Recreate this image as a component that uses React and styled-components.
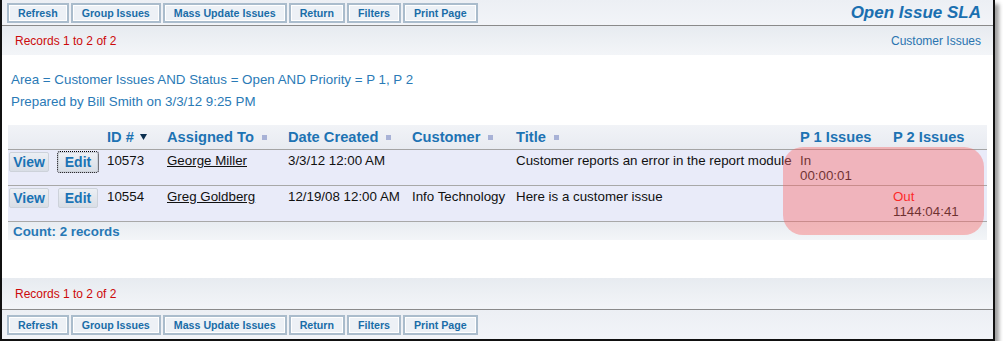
import React from 'react';
import styled, { createGlobalStyle } from 'styled-components';

const Global = createGlobalStyle`
  html, body { margin: 0; padding: 0; background: #fff; }
  body { font-family: "Liberation Sans", Arial, sans-serif; }
  * { box-sizing: border-box; }
`;

const Frame = styled.div`
  width: 995px;
  height: 341px;
  border: 2px solid #111;
  border-top: none;
  box-shadow: 4px 4px 4px rgba(0, 0, 0, 0.38);
  background: #fff;
  display: flex;
  flex-direction: column;
`;

const Toolbar = styled.div`
  display: flex;
  align-items: flex-start;
  justify-content: space-between;
  height: ${(p) => p.$h}px;
  padding: ${(p) => p.$pt}px 12px 0 5px;
  background: linear-gradient(#eceff4, #f2f4f8);
  ${(p) => (p.$bottom ? 'border-top: 1px solid #8a8a8a;' : 'border-bottom: 1px solid #8a8a8a;')}
  flex: none;
`;

const ButtonGroup = styled.div`
  display: flex;
  gap: 2px;
`;

const ToolButton = styled.button`
  height: 20px;
  padding: 0 9px;
  border: 2px solid #aabccc;
  box-shadow: inset 0 0 0 1px #fff;
  background: #edf1f6;
  color: #1a6da8;
  font-family: "Liberation Sans", Arial, sans-serif;
  font-weight: bold;
  font-size: 10.67px;
  line-height: 16px;
  cursor: pointer;
`;

const PageTitle = styled.div`
  font-size: 17px;
  font-weight: bold;
  font-style: italic;
  color: #1b6fb0;
  line-height: 20px;
`;

const RecordsBar = styled.div`
  display: flex;
  align-items: center;
  justify-content: space-between;
  height: ${(p) => p.$h}px;
  padding: 0 12px 0 13px;
  background: linear-gradient(#e7ebf0, #f3f5f8);
  font-size: 12px;
  flex: none;
`;

const RecordsText = styled.span`
  color: #cc0a0a;
`;

const AreaLink = styled.span`
  color: #2a74b0;
`;

const Main = styled.div`
  flex: 1;
  display: flex;
  flex-direction: column;
`;

const Criteria = styled.div`
  padding: 14px 0 0 9px;
  font-size: 13.33px;
  line-height: 22px;
  color: #2a7ab6;
`;

const TableWrap = styled.div`
  position: relative;
  width: 979px;
  margin: 12px 0 0 6px;
`;

const cols = '46px 49px 60px 121px 124px 104px 284px 93px 98px';

const HeaderRow = styled.div`
  display: grid;
  grid-template-columns: ${cols};
  height: 25px;
  align-items: center;
  background: linear-gradient(#f1f3f7, #e8ebf1);
  border-bottom: 1px solid #a4a4a4;
`;

const HeadCell = styled.div`
  padding-left: 4px;
  font-size: 14.67px;
  font-weight: bold;
  color: #1d73b3;
  white-space: nowrap;
  display: flex;
  align-items: center;
`;

const SortSquare = styled.span`
  display: inline-block;
  width: 5px;
  height: 5px;
  margin-left: 8px;
  background: #a8b2d6;
`;

const SortArrow = styled.svg`
  margin-left: 6px;
`;

const Row = styled.div`
  display: grid;
  grid-template-columns: ${cols};
  height: 36px;
  background: #e9ebf9;
  border-bottom: 1px solid #a8a8a8;
`;

const Cell = styled.div`
  padding: ${(p) => (p.$btn ? '2px 0 0 ' + p.$pl + 'px' : '3px 0 0 4px')};
  font-size: 13.33px;
  line-height: 15px;
  color: #111;
  white-space: nowrap;
`;

const RowButton = styled.button`
  width: 40px;
  height: 20px;
  padding: 0;
  border: 1px solid #cdd2da;
  border-radius: 2px;
  background: linear-gradient(#eceff4, #d9dee6);
  color: #1a73b5;
  font-family: "Liberation Sans", Arial, sans-serif;
  font-weight: bold;
  font-size: 14px;
  line-height: 18px;
  cursor: pointer;
  ${(p) => (p.$focus ? 'outline: 1px dotted #000; outline-offset: 0px;' : '')}
`;

const PersonLink = styled.a`
  color: #111;
  text-decoration: underline;
`;

const StatusLabel = styled.div`
  color: ${(p) => (p.$out ? '#ff0000' : '#111')};
`;

const CountRow = styled.div`
  height: 18px;
  padding-left: 5px;
  background: linear-gradient(#e8ecf1, #f3f5f8);
  font-size: 13.33px;
  font-weight: bold;
  line-height: 19px;
  color: #2778b5;
`;

const Highlight = styled.div`
  position: absolute;
  left: 775px;
  top: 22px;
  width: 201px;
  height: 88px;
  border-radius: 20px;
  background: rgba(250, 98, 97, 0.4);
  pointer-events: none;
`;

const buttons = ['Refresh', 'Group Issues', 'Mass Update Issues', 'Return', 'Filters', 'Print Page'];

const rows = [
  {
    id: '10573',
    who: 'George Miller',
    date: '3/3/12 12:00 AM',
    customer: '',
    title: 'Customer reports an error in the report module',
    p1: { label: 'In', time: '00:00:01' },
    p2: null,
    focus: true,
  },
  {
    id: '10554',
    who: 'Greg Goldberg',
    date: '12/19/08 12:00 AM',
    customer: 'Info Technology',
    title: 'Here is a customer issue',
    p1: null,
    p2: { label: 'Out', time: '1144:04:41', out: true },
    focus: false,
  },
];

function Sla({ v }) {
  if (!v) return null;
  return (
    <>
      <StatusLabel $out={v.out}>{v.label}</StatusLabel>
      <div>{v.time}</div>
    </>
  );
}

function ButtonBar() {
  return (
    <ButtonGroup>
      {buttons.map((b) => (
        <ToolButton key={b}>{b}</ToolButton>
      ))}
    </ButtonGroup>
  );
}

export default function App() {
  return (
    <>
      <Global />
      <Frame>
        <Toolbar $h={26} $pt={3}>
          <ButtonBar />
          <PageTitle>Open Issue SLA</PageTitle>
        </Toolbar>
        <RecordsBar $h={29}>
          <RecordsText>Records 1 to 2 of 2</RecordsText>
          <AreaLink>Customer Issues</AreaLink>
        </RecordsBar>
        <Main>
          <Criteria>
            <div>Area = Customer Issues AND Status = Open AND Priority = P 1, P 2</div>
            <div>Prepared by Bill Smith on 3/3/12 9:25 PM</div>
          </Criteria>
          <TableWrap>
            <HeaderRow>
              <HeadCell />
              <HeadCell />
              <HeadCell>
                ID #
                <SortArrow width="7" height="6" viewBox="0 0 7 6">
                  <polygon points="0,0 7,0 3.5,6" fill="#0b2f4f" />
                </SortArrow>
              </HeadCell>
              <HeadCell>
                Assigned To<SortSquare />
              </HeadCell>
              <HeadCell>
                Date Created<SortSquare />
              </HeadCell>
              <HeadCell>
                Customer<SortSquare />
              </HeadCell>
              <HeadCell>
                Title<SortSquare />
              </HeadCell>
              <HeadCell>P 1 Issues</HeadCell>
              <HeadCell>P 2 Issues</HeadCell>
            </HeaderRow>
            {rows.map((r) => (
              <Row key={r.id}>
                <Cell $btn $pl={1}>
                  <RowButton>View</RowButton>
                </Cell>
                <Cell $btn $pl={4}>
                  <RowButton $focus={r.focus}>Edit</RowButton>
                </Cell>
                <Cell>{r.id}</Cell>
                <Cell>
                  <PersonLink href="#">{r.who}</PersonLink>
                </Cell>
                <Cell>{r.date}</Cell>
                <Cell>{r.customer}</Cell>
                <Cell>{r.title}</Cell>
                <Cell>
                  <Sla v={r.p1} />
                </Cell>
                <Cell>
                  <Sla v={r.p2} />
                </Cell>
              </Row>
            ))}
            <CountRow>Count: 2 records</CountRow>
            <Highlight />
          </TableWrap>
        </Main>
        <RecordsBar $h={31}>
          <RecordsText>Records 1 to 2 of 2</RecordsText>
        </RecordsBar>
        <Toolbar $h={30} $pt={5} $bottom>
          <ButtonBar />
        </Toolbar>
      </Frame>
    </>
  );
}
